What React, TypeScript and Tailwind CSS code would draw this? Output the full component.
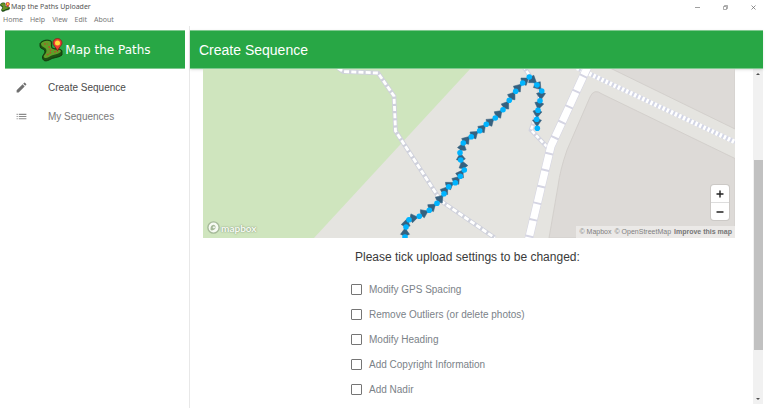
import React from 'react';
import { MdEdit, MdList } from 'react-icons/md';

const SANS = "font-['Liberation_Sans',Arial,sans-serif]";

const dots = [
  [405, 237], [406, 227], [409, 219.7], [419.3, 216.3], [429.3, 210.3], [437, 203.3], [444, 193.7],
  [448.7, 186.7], [455.3, 182.7], [460.3, 176.3], [464.3, 170], [460.7, 160], [460, 152.7], [463.3, 143],
  [471.3, 136.7], [479.7, 130.7], [486.3, 124.3], [495.3, 118], [503, 109.7], [509.3, 100.3], [515.7, 91.3],
  [522.7, 83], [529.3, 77], [537, 85], [541.7, 91], [540, 100.7], [538, 110.3], [536.7, 119.3], [537.3, 128.3],
];

// x, y, heading in degrees clockwise from north
const arrows = [
  [405, 232.5, 0], [406, 223.5, 10], [413.5, 218, 80], [424, 213, 65], [432, 207, 50], [440, 198.7, 40],
  [445, 190.5, 35], [449.5, 185, 55], [456.5, 180, 40], [460.5, 174, 30], [463, 165, -15], [460.7, 157.5, -5],
  [462.3, 147, 15], [466.3, 140, 40], [474.3, 134.3, 50], [482.3, 128.3, 45], [490.3, 121.7, 50],
  [498.7, 113.7, 45], [506, 105, 35], [512.3, 95.7, 35], [518, 87.7, 40], [525, 80.7, 55], [532.7, 80, 125],
  [538, 86, 140], [541, 95.3, 180], [539, 105, 190], [537.3, 113.3, 185], [537, 122, 180],
];

const settings = [
  'Modify GPS Spacing',
  'Remove Outliers (or delete photos)',
  'Modify Heading',
  'Add Copyright Information',
  'Add Nadir',
];

function PathLogo({ className }: { className: string }) {
  return (
    <svg viewBox="0 0 24 24" className={className} aria-hidden="true">
      <path d="M1 5.500 C3 2.500 8 1 12 3 C13.500 5 12 8 13 10 C16 11.500 22 10 23 13 L23 17 C20 20 14 19 10 22 C6 24 3.500 22.500 3.500 19 C4 16 7 15 5.500 12 C4 10.500 1 11 1 8Z" fill="#1d5212" stroke="#12330c" strokeWidth=".9" />
      <path d="M2 5.500 C4 3.200 8 2 11.500 3.500 C12.500 6 11 8.500 13 10.500 C16 12.500 21 11 22 13 C21 16.500 14 16 10 19 C7 20.800 4.500 20.300 4.700 18 C6 16 8.500 14 7 11 C5.500 8.700 2 9 2 5.500Z" fill="#5f9f28" />
      <path d="M5 6 L9 6 M10 8 C10 11 12 12 12 14 C11 16 9 16 7 17.500 M15 14 L19 13.500" stroke="#c0452a" strokeWidth="1.200" strokeDasharray="2 1.200" fill="none" />
      <path d="M18.500 13 C17 9 14 7.500 14 5 A4.500 4.500 0 0 1 23 5 C23 7.500 20 9 18.500 13Z" fill="#ee3e35" stroke="#7c1c17" strokeWidth=".7" />
      <circle cx="18.500" cy="5" r="2.500" fill="#ffd93b" />
    </svg>
  );
}

function MapDrawing() {
  return (
    <svg viewBox="203 68 532 170" preserveAspectRatio="xMidYMid slice" className="block h-[170px] w-full" role="img" aria-label="Sequence map">
      <rect x="203" y="68" width="532" height="170" fill="#e5e4e0" />
      <path d="M203 68 H471 L314 238 H203Z" fill="#cfe5be" />
      <path d="M735 158.500 L602 94 Q594 88 590 97 L567 150 Q560 170 558 186 L549 238 H735Z" fill="#dddad7" stroke="#cfccc8" strokeWidth=".8" />
      <path d="M610 68 L735 129 V68Z" fill="#dddad7" stroke="#cfccc8" strokeWidth=".8" />
      <g fill="none">
        <path d="M338 68 L343 71.500 L378 73 L394 96 L395.500 131 L441 201 L495 238" stroke="#cfd1dc" strokeWidth="4.500" />
        <path d="M338 68 L343 71.500 L378 73 L394 96 L395.500 131 L441 201 L495 238" stroke="#fff" strokeWidth="2.800" strokeDasharray="5 2.200" />
        <path d="M523 66 L540 90 L538 110 L531 130 L549 149" stroke="#d2d3df" strokeWidth="4.500" />
        <path d="M523 66 L540 90 L538 110 L531 130 L549 149" stroke="#fff" strokeWidth="2.600" strokeDasharray="4 2" />
        <path d="M577 68 L735 142" stroke="#d3d6e6" strokeWidth="4.500" />
        <path d="M577 68 L735 142" stroke="#fff" strokeWidth="4.500" strokeDasharray="2.500 2" />
        <path d="M588 66 L551 146 L528 242" stroke="#d5d5e3" strokeWidth="8.500" />
        <path d="M588 66 L551 146 L528 242" stroke="#fff" strokeWidth="7.400" strokeDasharray="15 2" strokeDashoffset="5" />
      </g>
      <polyline points={dots.map((d) => d.join(',')).join(' ')} fill="none" stroke="#0db2f8" strokeWidth="2" />
      {arrows.map(([x, y, a]) => (
        <path key={`${x}-${y}`} d="M0 -4.500 L4.500 1.800 Q0 4.800 -4.500 1.800Z" fill="#35617f" stroke="#35617f" strokeWidth=".5" strokeLinejoin="round" transform={`translate(${x} ${y}) rotate(${a})`} />
      ))}
      {dots.map(([x, y]) => (
        <circle key={`${x}-${y}`} cx={x} cy={y} r="2.800" fill="#00b4ff" />
      ))}
    </svg>
  );
}

function MapboxMark() {
  return (
    <div className="absolute bottom-1 left-1 flex items-center gap-px">
      <svg viewBox="0 0 14 14" className="size-[13px]" aria-hidden="true">
        <circle cx="7" cy="7" r="5.800" fill="#b3c7a5" stroke="#a5b999" strokeWidth="2" />
        <circle cx="7" cy="7" r="5.300" fill="#f7fbf4" />
        <path d="M4 10 C3.500 7 4.300 4 7.500 4 A3 3 0 0 1 7.500 9.500 C6 10.300 5 10.200 4 10Z" fill="#a5b999" />
        <path d="M7.500 5 L8 6.300 L9.300 6.800 L8 7.300 L7.500 8.600 L7 7.300 L5.700 6.800 L7 6.300Z" fill="#fff" />
      </svg>
      <span className="font-['Lato',sans-serif] text-[10px] leading-3 font-bold text-[#f7fbf4] [text-shadow:0_0_1px_#8fa383,0_0_2px_#8fa383]">mapbox</span>
    </div>
  );
}

function WindowBar() {
  return (
    <div className="flex h-[14px] items-center justify-between font-['Noto_Sans',sans-serif] text-[7px] leading-3 text-[#555]">
      <div className="flex items-center gap-px">
        <PathLogo className="size-[10px]" />
        <span>Map the Paths Uploader</span>
      </div>
      <div className="flex gap-[17px] pr-[9px]">
        <button aria-label="Minimise" className="flex size-[11px] items-center justify-center">
          <svg viewBox="0 0 5 5" className="size-[5px]"><path d="M0 2.500H5" stroke="#888" strokeWidth=".8" /></svg>
        </button>
        <button aria-label="Restore" className="flex size-[11px] items-center justify-center">
          <svg viewBox="0 0 5 5" className="size-[5px]" fill="none" stroke="#888" strokeWidth=".7"><path d="M.5 1.500H3.500V4.500H.5ZM1.500 1.500V.5H4.500V3.500H3.500" /></svg>
        </button>
        <button aria-label="Close" className="flex size-[11px] items-center justify-center">
          <svg viewBox="0 0 5 5" className="size-[5px]"><path d="M.5 .5L4.500 4.500M4.500 .5L.5 4.500" stroke="#666" strokeWidth=".7" /></svg>
        </button>
      </div>
    </div>
  );
}

export default function App() {
  return (
    <div className={`flex h-screen flex-col bg-white ${SANS}`}>
      <WindowBar />
      <nav className="flex h-3 shrink-0 items-center gap-[7px] pl-[3px] font-['Noto_Sans',sans-serif] text-[7px] leading-3 text-[#777]">
        {['Home', 'Help', 'View', 'Edit', 'About'].map((m) => (
          <button key={m}>{m}</button>
        ))}
      </nav>
      <div className="flex min-h-0 flex-1">
        <aside className="w-[190px] shrink-0 border-r border-[#e8e8e8] pt-1 pr-1 pl-[5px]">
          <div className="flex h-[39px] items-center justify-center gap-[2px] border-y border-[#7fc98f] bg-[#28a745] font-['DejaVu_Sans',sans-serif] text-xs text-white">
            <PathLogo className="size-6" />
            <span>Map the Paths</span>
          </div>
          <ul className="flex flex-col pt-1 text-[10px] leading-[29px]">
            <li>
              <a href="#create" className="flex items-center gap-5 pl-[10px] text-[#4a4a4a]">
                <MdEdit className="size-[13px] text-[#707070]" />Create Sequence
              </a>
            </li>
            <li>
              <a href="#sequences" className="flex items-center gap-5 pl-[10px] text-[#7a7a7a]">
                <MdList className="size-[13px] text-[#8a8a8a]" />My Sequences
              </a>
            </li>
          </ul>
        </aside>
        <main className="mr-[5px] flex min-w-0 flex-1 flex-col pt-1 pb-1">
          <header className="relative flex h-[39px] shrink-0 items-center border-y border-[#7fc98f] bg-[#28a745] pl-[9px] text-white shadow">
            <h1 className="text-sm leading-5">Create Sequence</h1>
          </header>
          <div className="flex min-h-0 flex-1">
            <div className="min-w-0 flex-1 overflow-hidden pr-[18px] pl-[13px]">
              <div className="relative -mt-px">
                <MapDrawing />
                <MapboxMark />
                <div className="absolute right-[6px] bottom-[18px] flex w-[18px] flex-col overflow-hidden rounded-[3px] bg-white text-[#222] shadow-[0_0_0_1px_#ccc9c6]">
                  <button aria-label="Zoom in" className="flex h-[18px] items-center justify-center border-b border-[#ddd]">
                    <svg viewBox="0 0 8 8" className="size-2"><path d="M4 1V7M1 4H7" stroke="#222" strokeWidth="1.400" strokeLinecap="round" /></svg>
                  </button>
                  <button aria-label="Zoom out" className="flex h-[17px] items-center justify-center">
                    <svg viewBox="0 0 8 8" className="size-2"><path d="M1 4H7" stroke="#222" strokeWidth="1.400" strokeLinecap="round" /></svg>
                  </button>
                </div>
                <div className="absolute right-0 bottom-0 flex h-3 items-center gap-[3px] bg-[#ebe9e7] px-[3px] text-[7px] leading-3 text-[#808080]">
                  <a href="#mapbox">© Mapbox</a>
                  <a href="#osm">© OpenStreetMap</a>
                  <a href="#improve" className="font-bold text-[#777]">Improve this map</a>
                </div>
              </div>
              <form className="mx-auto flex w-[236px] flex-col">
                <h2 className="mt-2 mb-2 pl-1 text-xs leading-[23px] whitespace-nowrap text-[#3a3a3a]">Please tick upload settings to be changed:</h2>
                {settings.map((s) => (
                  <label key={s} className="flex h-[25px] items-center gap-[7px] text-[10px] whitespace-nowrap text-[#7b8288]">
                    <input type="checkbox" className="size-[11px] shrink-0 appearance-none rounded-[1px] border border-[#757575] checked:bg-[#757575]" />
                    {s}
                  </label>
                ))}
              </form>
            </div>
            <div className="flex w-[10px] shrink-0 flex-col items-center bg-[#f1f1f1]" aria-hidden="true">
              <svg viewBox="0 0 10 10" className="size-[10px]"><path d="M3 6L5 4L7 6Z" fill="#505050" /></svg>
              <div className="w-full flex-[81]" />
              <div className="w-[9px] flex-[190] bg-[#c1c1c1]" />
              <div className="w-full flex-[44]" />
              <svg viewBox="0 0 10 10" className="size-[10px]"><path d="M3 4L5 6L7 4Z" fill="#505050" /></svg>
            </div>
          </div>
        </main>
      </div>
    </div>
  );
}
